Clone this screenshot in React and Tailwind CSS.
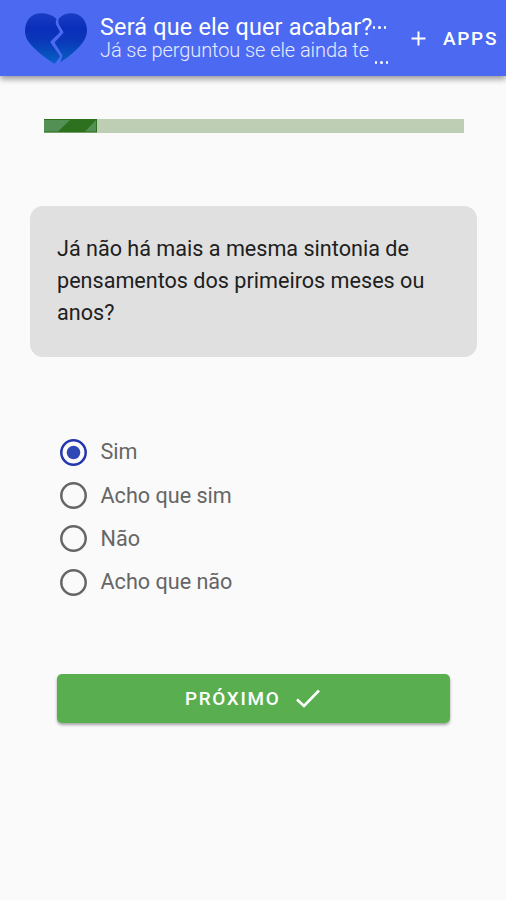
const options = ['Sim', 'Acho que sim', 'Não', 'Acho que não'];

function BrokenHeart() {
  return (
    <svg className="h-[51px] w-[64px] shrink-0" viewBox="0 0 64 51">
      <defs>
        <linearGradient id="heart" gradientUnits="userSpaceOnUse" x1="0" y1="0" x2="0" y2="51">
          <stop offset="0" stopColor="#1a3cc4" />
          <stop offset="0.3" stopColor="#0a2eba" />
          <stop offset="0.55" stopColor="#0a38ba" />
          <stop offset="0.8" stopColor="#0850bd" />
          <stop offset="1" stopColor="#0861cb" />
        </linearGradient>
      </defs>
      <path
        fill="url(#heart)"
        d="M32.500 6C28.500 2 22.500.3 17 .3 7 .3 1 8 1 18c0 6 3 11 8 16 7 7 14 12 20.500 16.300.8.5 1.300.3 1.800-.4l4.200-5.400c.5-.7.5-1.300.1-2L26.800 30c-.5-.8-.4-1.500.2-2.100l8.200-7.800c.6-.6.8-1.300.4-2L32.300 12c-.7-1.600-.6-4 .2-6z"
      />
      <path
        fill="url(#heart)"
        d="M34.800 5.800C38 2 42.500.3 47 .3 57 .3 63 8 63 17.500c0 5.500-2.500 10.500-7 15.500-5.500 6-11.500 11-18.500 15.700-.8.500-1.200.1-.9-.7l1.700-4.500c.2-.6.1-1.200-.2-1.800l-7-11.300c-.4-.7-.3-1.300.3-1.900l7.400-8c.6-.7.7-1.300.3-2.100L35 11.500c-.8-1.900-1-4-.2-5.700z"
      />
    </svg>
  );
}

export default function App() {
  return (
    <div className="h-[900px] w-[506px] overflow-hidden bg-[#fafafa] font-['Roboto',sans-serif]">
      <header className="flex h-[76px] bg-[#4c6af1] pl-6 shadow-[0_3px_6px_rgba(0,0,0,0.4)]">
        <div className="pt-[12.500px]">
          <BrokenHeart />
        </div>
        <div className="ml-[12px] w-[293px] shrink-0 pt-[15px] text-white">
          <div className="flex h-[25px] whitespace-nowrap">
            <span className="text-[23.400px] leading-[25px] tracking-[0.190px]">Será que ele quer acabar?</span>
            <Dots className="mt-[11px]" />
          </div>
          <div className="flex h-[22px] whitespace-nowrap">
            <span className="text-[20px] leading-[21px] font-light tracking-[-0.080px] text-[#e8ebff]">Já se perguntou se ele ainda te</span>
            <Dots className="mt-[21px] ml-[6px]" />
          </div>
        </div>
        <button className="ml-[18px] flex h-[76px] items-center text-[19px] font-medium tracking-[1.700px] text-white">
          <svg className="mr-[17px] size-[15px]" viewBox="0 0 15 15">
            <path d="M7.500.5v14M.5 7.500h14" stroke="white" strokeWidth="2" />
          </svg>
          <span className="pt-px leading-[28px]">APPS</span>
        </button>
      </header>

      <main>
        <div className="mt-[43px] ml-[44px] h-[13.500px] w-[420px] bg-[#bdceb4]">
          <svg className="block h-[13.500px] w-[53px]" viewBox="0 0 53 13.5" preserveAspectRatio="none">
            <path fill="#2d701d" d="M0 0h53v13.500H0z" />
            <path fill="#539053" d="M0 1h26L14 12.500H0zM52 1v11.500H41z" />
          </svg>
        </div>

        <section className="mt-[73.500px] ml-[30px] h-[150.500px] w-[447px] rounded-[13px] bg-[#e0e0e0] px-[27px] pt-[27px] text-[21.600px] leading-[32.200px] text-[#202020]">
          <p className="whitespace-nowrap">
            Já não há mais a mesma sintonia de
            <br />
            pensamentos dos primeiros meses ou
            <br />
            anos?
          </p>
        </section>

        <div className="mt-[74.500px] ml-[59.500px]" role="radiogroup">
          {options.map((label, i) => (
            <div key={label} role="radio" aria-checked={i === 0} className="flex h-[43.200px] items-center gap-[14px]">
              <svg className="size-[27px]" viewBox="0 0 27 27">
                <circle cx="13.500" cy="13.500" r="12.200" fill="none" strokeWidth="2.500" stroke={i === 0 ? '#2436ae' : '#666666'} />
                {i === 0 && <circle cx="13.500" cy="13.500" r="6.800" fill="#2f48b6" />}
              </svg>
              <span className="text-[21.600px] text-[#666666]">{label}</span>
            </div>
          ))}
        </div>

        <button className="mt-[70px] ml-[57px] flex h-[49px] w-[393px] items-center rounded-[5px] bg-[#59af50] pl-[128px] text-[18.900px] font-medium tracking-[1.700px] text-white shadow-[0_2px_3px_rgba(0,0,0,0.35)]">
          <span className="pt-px leading-[28px]">PRÓXIMO</span>
          <svg className="ml-[16px] h-[19px] w-[24px]" viewBox="0 0 24 19">
            <path d="M1 10.500l7 6.500L23 1.500" fill="none" stroke="white" strokeWidth="2.600" />
          </svg>
        </button>
      </main>
    </div>
  );
}

function Dots({ className = '' }) {
  return (
    <span className={`flex h-[3px] gap-[3px] ${className}`}>
      <i className="size-[2.500px] rounded-full bg-white" />
      <i className="size-[2.500px] rounded-full bg-white" />
      <i className="size-[2.500px] rounded-full bg-white" />
    </span>
  );
}
